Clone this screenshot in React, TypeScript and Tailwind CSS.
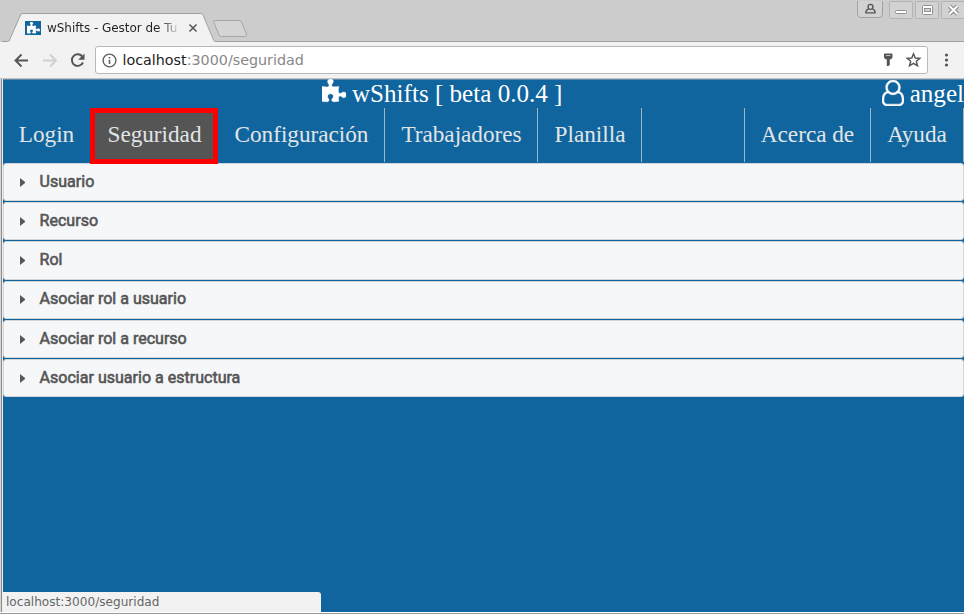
import React from "react";

const menuLeft = [
  { label: "Login", box: "w-[87px]" },
  { label: "Seguridad", box: "w-[128px]" },
  { label: "Configuración", box: "w-[167px]" },
  { label: "Trabajadores", box: "w-[153px]" },
  { label: "Planilla", box: "w-[104px]" },
];

const sections = [
  "Usuario",
  "Recurso",
  "Rol",
  "Asociar rol a usuario",
  "Asociar rol a recurso",
  "Asociar usuario a estructura",
];

function Puzzle({ className }: { className: string }) {
  return (
    <svg className={className} viewBox="0 0 1664 1792" preserveAspectRatio="none" fill="currentColor" stroke="currentColor" strokeWidth="30">
      <path d="M1664 1098q0 81-44.5 135t-123.5 54q-41 0-77.5-17.5t-59-38-56.5-38-71-17.5q-110 0-110 124 0 39 16 115t15 115v5q-22 0-33 1-34 3-97.5 11.5t-115.5 13.5-98 5q-61 0-103-26.5t-42-83.5q0-37 17.5-71t38-56.5 38-59 17.5-77.5q0-79-54-123.5t-135-44.5q-84 0-143 45.5t-59 127.5q0 43 15 83t33.5 64.5 33.5 53 15 50.5q0 45-46 89-37 35-117 35-95 0-245-24-9-2-27.5-4t-27.5-4l-13-2q-1 0-3-1-2 0-2-1v-1024q2 1 17.500 3.500t34 5 21.500 3.500q150 24 245 24 80 0 117-35 46-44 46-89 0-22-15-50.500t-33.500-53-33.500-64.500-15-83q0-82 59-127.500t144-45.500q80 0 134 44.500t54 123.500q0 41-17.500 77.500t-38 59-38 56.500-17.500 71q0 57 42 83.500t103 26.500q64 0 180-15t163-17v2q-1 2-3.500 17.500t-5 34-3.500 21.500q-24 150-24 245 0 80 35 117 44 46 89 46 22 0 50.500-15t53-33.500 64.500-33.500 83-15q82 0 127.500 59t45.500 143z" />
    </svg>
  );
}

function UserOutline({ className }: { className: string }) {
  return (
    <svg className={className} viewBox="0 0 1536 1792" preserveAspectRatio="none" fill="currentColor" stroke="currentColor" strokeWidth="35">
      <path d="M1201 784q47 14 89.5 38t89 73 79.5 115.5 55 172 22 236.5q0 154-100 263.5t-241 109.5h-854q-141 0-241-109.5t-100-263.5q0-131 22-236.5t55-172 79.5-115.5 89-73 89.5-38q-79-125-79-272 0-104 40.5-198.5t109.5-163.5 163.5-109.5 198.5-40.5 198.5 40.5 163.5 109.5 109.5 163.5 40.5 198.5q0 147-79 272zm-433-656q-159 0-271.5 112.5t-112.5 271.5 112.5 271.5 271.5 112.5 271.5-112.5 112.5-271.5-112.5-271.5-271.5-112.5zm427 1536q88 0 150.5-71.5t62.5-173.5q0-239-78.5-377t-225.5-145q-145 127-336 127t-336-127q-147 7-225.5 145t-78.5 377q0 102 62.5 173.5t150.5 71.5h854z" />
    </svg>
  );
}

function TabStrip() {
  return (
    <header className="relative h-[42px] w-[964px] bg-[#cccccc]">
      <svg className="absolute inset-0 h-[42px] w-[964px]" viewBox="0 0 964 42" fill="none">
        <path d="M2 41.5H9L21 14.5Q21.7 13.5 23 13.5H201Q202.500 13.500 203 14.500L214.500 41.500V42H2Z" fill="#f2f2f2" />
        <path d="M2 41.500H7.500Q9 41.500 9.500 40L20.500 15Q21 13.500 23 13.500H201Q202.500 13.500 203 15L213.500 40Q214 41.500 216 41.500H964" stroke="#a0a0a0" />
        <path d="M215.500 20.500H239Q241 20.500 241.800 22.500L246.500 34Q247 36.500 245 36.500H221.500Q219.800 36.500 219 35L213.700 22Q213.300 20.500 215.500 20.500Z" fill="#d4d4d4" stroke="#a6a6a6" />
        <path d="M189.500 24.500L196.500 31.500M196.500 24.500L189.500 31.500" stroke="#555" strokeWidth="1.500" />
        <path d="M857.500 1V14.500Q858 17.500 861 17.500H879Q882 17.500 882.500 14.500V1" fill="#d2d2d2" stroke="#a0a0a0" />
        <g fill="#d2d2d2" stroke="#b3b3b3">
          <rect x="889.500" y="1.500" width="23" height="17" rx="1" />
          <rect x="915.500" y="1.500" width="23" height="17" rx="1" />
          <rect x="941.500" y="1.500" width="24" height="17" rx="1" />
        </g>
        <circle cx="870.500" cy="6.800" r="2.500" stroke="#555" strokeWidth="1.300" />
        <path d="M868.500 9.200Q865.800 10 865.800 12.800H875.200Q875.200 10 872.500 9.200" stroke="#555" strokeWidth="1.300" />
        <rect x="895.500" y="10.500" width="11" height="3" rx="1" fill="#fff" stroke="#909090" />
        <rect x="922.500" y="5.500" width="10" height="9" rx="1" fill="#fff" stroke="#909090" />
        <rect x="924.500" y="8.500" width="6" height="3" fill="#d2d2d2" stroke="#909090" />
        <path d="M949.500 6L957.500 14M957.500 6L949.500 14" stroke="#888" strokeWidth="4" />
        <path d="M949.500 6L957.500 14M957.500 6L949.500 14" stroke="#fff" strokeWidth="2" />
      </svg>
      <div className="relative flex h-[42px] items-start pl-[25px] pt-[21px]">
        <span className="h-[14px] w-4 bg-[#11659e] pl-[2px] pt-px text-white"><Puzzle className="h-[13px] w-[13px]" /></span>
        <span className="ml-[6px] mt-[-2px] w-[133px] overflow-hidden whitespace-nowrap bg-gradient-to-r from-[#222] from-85% to-[#f2f2f2] bg-clip-text font-['DejaVu_Sans',sans-serif] text-[12px] leading-[18px] tracking-[-0.03px] text-transparent">
          wShifts - Gestor de Tu
        </span>
      </div>
    </header>
  );
}

function Toolbar() {
  return (
    <div className="flex h-[37px] w-[964px] items-center border-b border-[#bdc5ca] bg-[#f2f2f2] pl-[14px]">
      <svg className="h-[22px] w-[72px]" viewBox="0 0 72 22" fill="none" strokeWidth="1.900">
        <path d="M14 11.500H1.500M7.500 5.500L1.500 11.500L7.500 17.500" stroke="#555" />
        <path d="M29 11.500H41.500M36 5.500L42 11.500L36 17.500" stroke="#d0d0d0" />
        <path d="M68.500 7.800A5.800 5.800 0 1 0 69 13.500" stroke="#555" />
        <path d="M70.500 4.500V10.800H64.200Z" fill="#555" />
      </svg>
      <div className="ml-[9px] flex h-[28px] w-[833px] items-center rounded-[3px] border border-[#b8b8b8] bg-white pl-[6px]">
        <svg className="h-[15px] w-[15px]" viewBox="0 0 15 15" fill="none" stroke="#606060" strokeWidth="1.400">
          <circle cx="7.500" cy="7.500" r="6.400" />
          <path d="M7.500 6.700V11M7.500 4V5.400" strokeWidth="1.600" />
        </svg>
        <div className="ml-[5.5px] w-[200px] whitespace-nowrap font-['DejaVu_Sans',sans-serif] text-[14.3px] leading-5 text-[#888]"><span className="text-[#222]">localhost</span>:3000/seguridad</div>
        <svg className="ml-auto mr-[5px] h-[18px] w-[39px]" viewBox="0 0 39 18" fill="none">
          <path d="M1 3Q1 2.500 2 2.500H8.500Q9.500 2.500 9.500 3V6Q9.500 8 6.800 8.500V14L5.300 15H3.800V8.500Q1 8 1 6Z" fill="#555" />
          <path d="M3 4.500H7.500" stroke="#bbb" />
          <path d="M30.500 2.800L32.200 7L36.800 7.300L33.300 10.200L34.500 14.700L30.500 12.300L26.500 14.700L27.700 10.200L24.200 7.300L28.800 7Z" stroke="#555" strokeWidth="1.400" />
        </svg>
      </div>
      <svg className="ml-4 h-[16px] w-[5px]" viewBox="0 0 5 16" fill="#555"><circle cx="2.500" cy="3" r="1.600" /><circle cx="2.500" cy="8" r="1.600" /><circle cx="2.500" cy="13" r="1.600" /></svg>
    </div>
  );
}

function Item({ label, box, index }: { label: string; box: string; index: number }) {
  const look =
    label === "Seguridad"
      ? "h-[56px] border-[5px] border-[#fc0000] bg-[#555] pb-[3px] pl-px"
      : index > 1
        ? "h-[54px] border-r border-[#9fb5c2] pb-px pl-px"
        : "h-[54px] pb-px";
  return (
    <div className={`${box} ${look} z-10 flex shrink-0 items-center justify-center`}>
      <span className="whitespace-nowrap">{label}</span>
    </div>
  );
}

export default function App() {
  return (
    <div className="h-[614px] w-[965px] overflow-hidden bg-white">
      <TabStrip />
      <Toolbar />
      <div className="flex h-[533px] w-[964px]">
        <div className="w-[3px] shrink-0 border-x border-l-[#d6d6d6] border-r-[#eeeeee] bg-[#8a8a8a]" />
        <main className="relative flex min-w-0 flex-1 flex-col bg-[#11659e] font-['Liberation_Serif',serif] text-white">
          <div className="flex h-[29px] shrink-0 items-start border-t border-[#628aa8] pl-[318.6px] text-[25.1px] leading-[27px]">
            <Puzzle className="mt-[-1px] h-[26px] w-[24.4px]" />
            <span className="ml-[6px] whitespace-nowrap">wShifts [ beta 0.0.4 ]</span>
            <span className="ml-auto flex whitespace-nowrap"><UserOutline className="mr-[6px] h-[26px] w-[22px]" />angel</span>
          </div>
          <nav className="flex h-[55px] shrink-0 text-[23.2px] text-[#e2e5e6]">
            {menuLeft.map((item, i) => <Item key={item.label} {...item} index={i} />)}
            <div className="ml-auto flex h-[54px]">
              <div className="flex w-[126px] items-center justify-center border-l border-[#9fb5c2] pb-px">Acerca de</div>
              <div className="flex w-[94px] items-center justify-center border-x border-[#9fb5c2] pb-px">Ayuda</div>
            </div>
          </nav>
          <div className="flex flex-col gap-px">
            {sections.map((label) => (
              <div key={label} className="flex h-[38.2px] items-center rounded-[3px] border border-[#d3d5d7] bg-[#f6f7f9] pb-[0.6px] pl-[15.500px] font-[Roboto,sans-serif] text-[16.05px] text-[#555] [-webkit-text-stroke:0.6px_#555]">
                <svg className="mt-[1px] h-[9px] w-[5.5px]" viewBox="0 0 5 8" preserveAspectRatio="none" fill="#4f5962"><path d="M0 0L5 4L0 8Z" /></svg>
                <span className="ml-[14.6px] whitespace-nowrap">{label}</span>
              </div>
            ))}
          </div>
          <div className="absolute bottom-0 left-0 flex h-[20px] w-[318px] items-center rounded-tr-[3px] bg-[#f2f2f2] pl-[3px] font-['DejaVu_Sans',sans-serif] text-[12.1px] text-[#666]">localhost:3000/seguridad</div>
        </main>
      </div>
      <div className="h-[2px] w-[964px] border-t border-white bg-[#999]" />
    </div>
  );
}
